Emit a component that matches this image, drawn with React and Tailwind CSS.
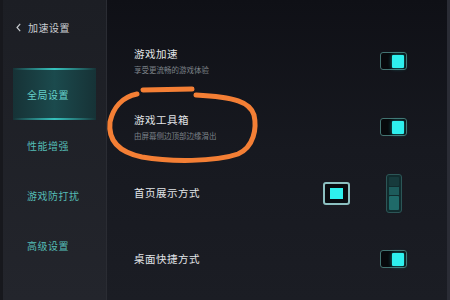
import React from 'react';

const font = { fontFamily: '"Noto Sans CJK SC", "Noto Sans", sans-serif' };

const Toggle = () => (
  <div className="w-[27px] h-[18px] rounded-[3px] border border-[#437472] bg-[#07090c] flex items-center justify-end pr-[2px]">
    <div className="w-[12px] h-[13px] rounded-[1px] bg-[#2ef0ee] shadow-[0_0_4px_rgba(46,240,238,0.5)]" />
  </div>
);

const Row = ({ title, sub, children }) => (
  <div className="h-[66px] flex items-center justify-between">
    <div className="flex flex-col gap-[5px]">
      <span className="text-[10.5px] leading-[12px] text-[#e2e5e8] tracking-[0.5px]">{title}</span>
      {sub && <span className="text-[7.5px] leading-[9px] text-[#7c8288]">{sub}</span>}
    </div>
    {children}
  </div>
);

export default function App() {
  const menu = ['性能增强', '游戏防打扰', '高级设置'];

  return (
    <div className="relative w-[450px] h-[300px] flex overflow-hidden bg-[#15171d]" style={font}>
      {/* Sidebar */}
      <div className="w-[107px] h-full flex flex-col bg-gradient-to-b from-[#1c1e24] to-[#23252c] border-r border-[#2a2c33] border-l-[3px] border-l-[#17181d]">
        <div className="h-[54px] flex items-center pl-[13px] gap-[7px]">
          <svg width="5" height="9" viewBox="0 0 5 9">
            <path d="M4.2 0.8 L1 4.5 L4.2 8.2" fill="none" stroke="#c5c9cd" strokeWidth="1.2" />
          </svg>
          <span className="text-[10px] text-[#c9cdd1] tracking-[0.5px]">加速设置</span>
        </div>
        <div className="mt-[14px] mx-[10px] h-[52px] relative flex items-center pl-[14px] bg-gradient-to-r from-[#163236] via-[#1b4a4d] to-[#163236]">
          <div className="absolute top-0 left-0 right-0 h-[2px] bg-gradient-to-r from-transparent via-[#36c2bd] to-transparent" />
          <div className="absolute bottom-0 left-0 right-0 h-[2px] bg-gradient-to-r from-transparent via-[#36c2bd] to-transparent" />
          <span className="text-[10px] text-[#66d2cb] tracking-[0.5px]">全局设置</span>
        </div>
        {menu.map(m => (
          <div key={m} className="h-[50px] flex items-center pl-[24px]">
            <span className="text-[10px] text-[#55bdb6] tracking-[0.5px]">{m}</span>
          </div>
        ))}
      </div>

      {/* Main */}
      <div className="flex-1 h-full flex flex-col pt-[28px] pl-[27px] pr-[40px] bg-gradient-to-b from-[#0f1016] via-[#171920] to-[#1b1d24] border-r-[3px] border-r-[#2a2c35]">
        <Row title="游戏加速" sub="享受更流畅的游戏体验">
          <Toggle />
        </Row>
        <Row title="游戏工具箱" sub="由屏幕侧边顶部边缘滑出">
          <Toggle />
        </Row>
        <Row title="首页展示方式">
          <div className="flex items-center gap-[30px]">
            <div className="w-[27px] h-[23px] rounded-[3px] border-2 border-[#8cc0c1] bg-[#0a0d11] flex items-center justify-center">
              <div className="w-[13px] h-[11px] bg-[#2ef0ee]" />
            </div>
            <div className="w-[27px] flex justify-center">
              <div className="w-[16px] h-[39px] rounded-[3px] border border-[#2c5657] bg-[#112c2e] flex flex-col p-[2px] gap-[1px]">
                <div className="h-[9px] bg-[#173a3c] rounded-[1px]" />
                <div className="h-[8px] bg-[#1d5b5b]" />
                <div className="flex-1 bg-[#1f6a69] rounded-[1px]" />
              </div>
            </div>
          </div>
        </Row>
        <Row title="桌面快捷方式">
          <Toggle />
        </Row>
      </div>

      {/* hand-drawn annotation */}
      <svg className="absolute inset-0 pointer-events-none" width="450" height="300" viewBox="0 0 450 300">
        <g fill="none" stroke="#f47f35" strokeWidth="5" strokeLinecap="round">
          <path d="M143 90 L192 89" />
          <path d="M137 94 C122 97 113 108 110 122 C108 140 118 152 142 157 C170 162 215 162 238 154 C254 147 257 128 254 115 C250 102 235 97 196 95" />
        </g>
      </svg>
    </div>
  );
}
